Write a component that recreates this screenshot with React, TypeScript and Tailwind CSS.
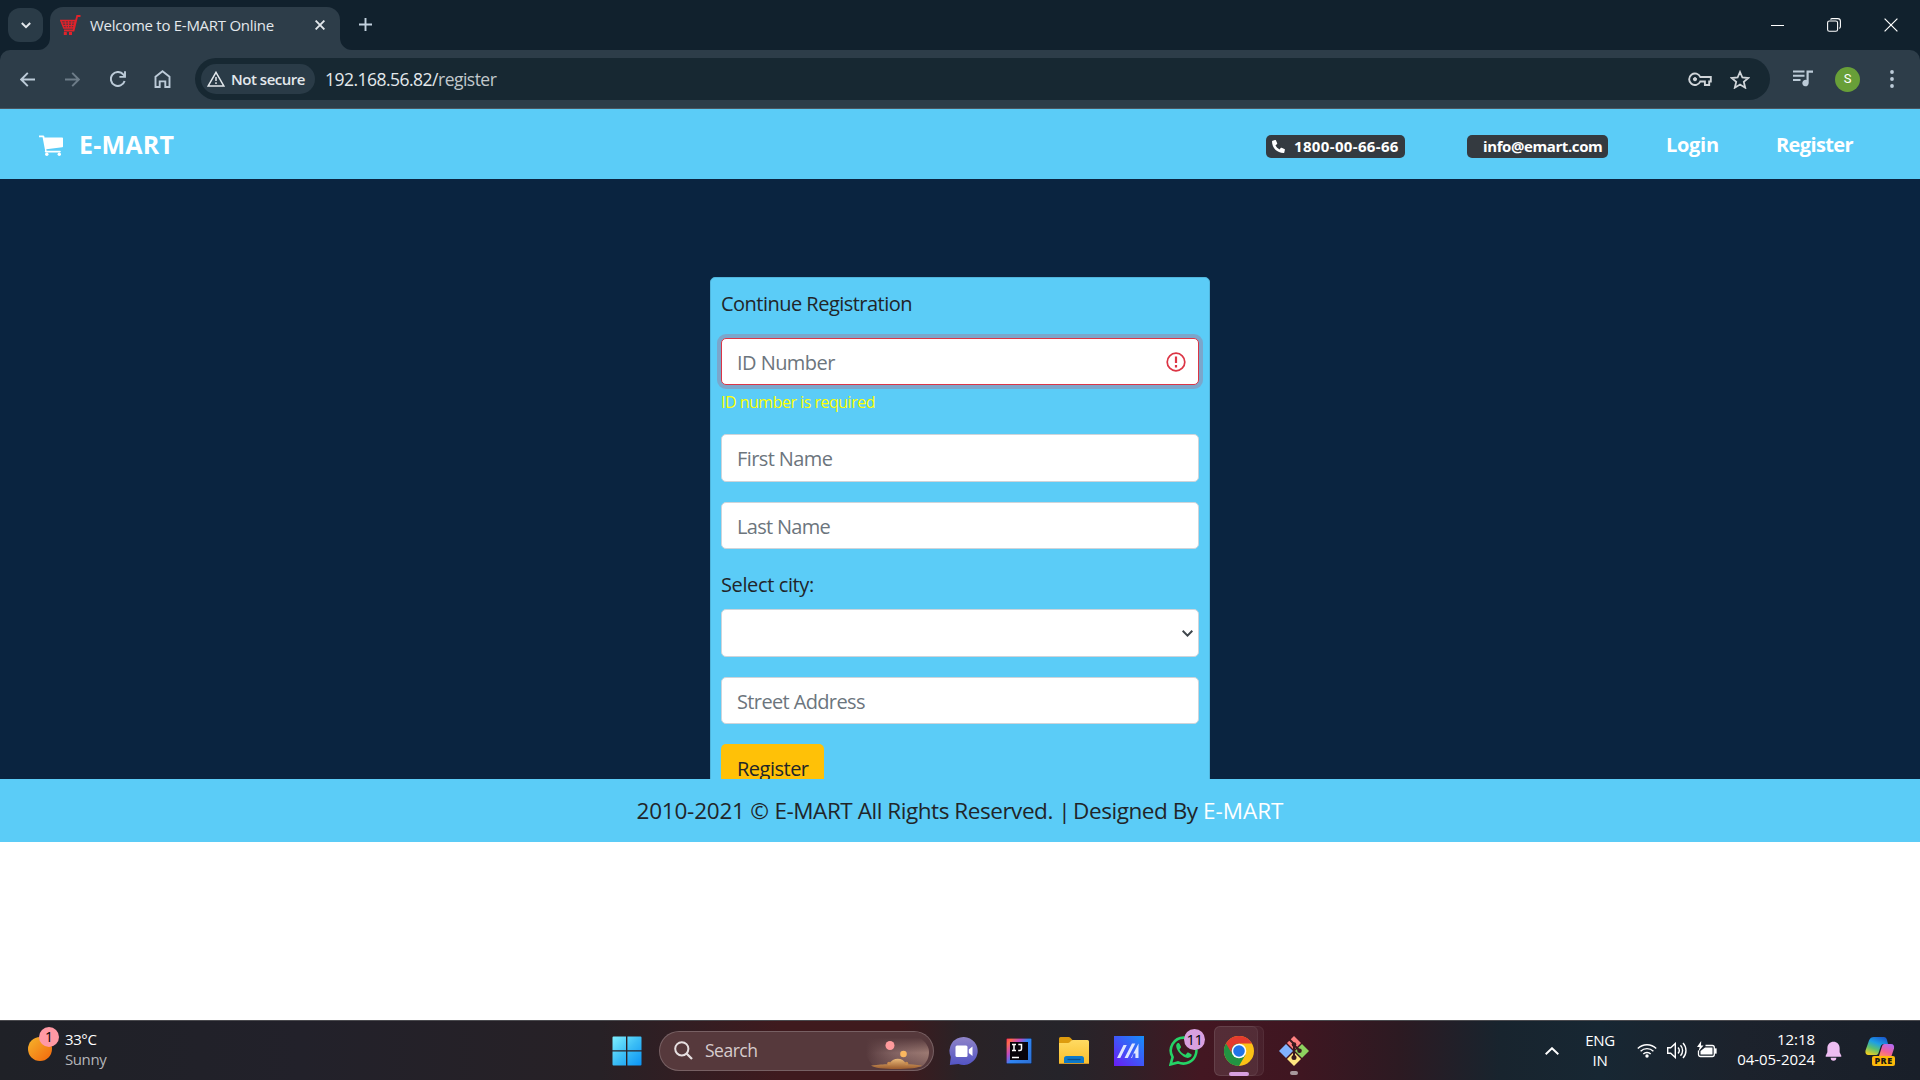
import React from "react";

function Cart({ className }: { className?: string }) {
  return (
    <svg viewBox="0 0 24 21" className={className} fill="currentColor">
      <path d="M0 .4h4.2c.6 0 1 .4 1.100 .9l.2 1.100H23.200c.5 0 .8.4.8.8v8.200c0 .4-.3.8-.7.800L7.300 14.200l.3 1.500H21c.5 0 .8.4.8.8s-.3.9-.8.9H6.700c-.6 0-1-.5-.9-1.100l.3-.9L3.600 2.200H0z" />
      <circle cx="7.800" cy="19.200" r="1.700" />
      <circle cx="20.300" cy="19.200" r="1.700" />
    </svg>
  );
}

function Favicon() {
  return (
    <svg viewBox="0 0 21 21" className="h-[21px] w-[21px]" fill="none" stroke="#e0232b">
      <path d="M20.500 1h-3.300L13.600 15.500H4" strokeWidth="1.800" />
      <path d="M.8 5.500h14.700l-2 7.500H3.800z" fill="#e0232b" fillOpacity=".3" strokeWidth="1.400" />
      <path d="M2 8h13M3 10.500h11M5 5.500l1.500 7.500M8.500 5.500v7.500M12 5.500l-1 7.500" strokeWidth="1.100" />
      <path d="M3.800 18.500h3M9 18.500h3" strokeWidth="3.200" />
    </svg>
  );
}

function TabStrip() {
  return (
    <div className="flex h-[50px] items-start bg-[#11212d]">
      <div className="ml-2 mt-2 flex h-[34px] w-[35px] items-center justify-center rounded-[12px] bg-[#2a3b47]">
        <svg viewBox="0 0 10 7" className="h-[7px] w-[10px]" fill="none" stroke="#e3e8ec" strokeWidth="2">
          <path d="M.8 1l4.200 4.200L9.200 1" />
        </svg>
      </div>
      <div className="relative ml-[7px] mt-[7px] flex h-[43px] w-[290px] rounded-t-[13px] bg-[#2d3d49] pl-[10px]">
        <svg viewBox="0 0 12 12" className="absolute -left-3 bottom-0 h-3 w-3" fill="#2d3d49">
          <path d="M12 0v12H0A12 12 0 0 0 12 0z" />
        </svg>
        <svg viewBox="0 0 12 12" className="absolute -right-3 bottom-0 h-3 w-3" fill="#2d3d49">
          <path d="M0 0v12h12A12 12 0 0 1 0 0z" />
        </svg>
        <div className="mt-[8px]"><Favicon /></div>
        <span className="ml-[9px] mt-[7px] w-[225px] whitespace-nowrap text-[15px] leading-[22px] tracking-[-0.27px] text-[#e3e8ec]">Welcome to E-MART Online</span>
        <svg viewBox="0 0 10 10" className="mt-[13px] h-[10px] w-[10px]" fill="none" stroke="#e3e8ec" strokeWidth="1.900">
          <path d="M.6.6l8.800 8.800M9.400.6L.6 9.400" />
        </svg>
      </div>
      <svg viewBox="0 0 13 13" className="ml-[19px] mt-[18px] h-[13px] w-[13px]" stroke="#c3d2df" strokeWidth="1.900">
        <path d="M6.500 0v13M0 6.500h13" />
      </svg>
      <div className="ml-auto flex items-center pt-[18px]">
        <div className="mr-[43px] h-px w-[13px] bg-white" />
        <svg viewBox="0 0 14 14" className="mr-[43px] h-[14px] w-[14px]" fill="none" stroke="#fff" strokeWidth="1.100">
          <rect x=".6" y="3" width="10" height="10.200" rx="1.800" />
          <path d="M3.500 1.600c.4-.7 1-1 1.700-1h5.500c1.700 0 2.700 1 2.700 2.700v5.300c0 .9-.4 1.500-1 1.900" />
        </svg>
        <svg viewBox="0 0 14 14" className="mr-[22px] h-[14px] w-[14px]" fill="none" stroke="#fff" strokeWidth="1.200">
          <path d="M.6.6l12.800 12.800M13.400.6L.6 13.400" />
        </svg>
      </div>
    </div>
  );
}

function Toolbar() {
  const c = "#bccbd8";
  return (
    <div className="bg-[#11212d]">
      <div className="flex h-[59px] items-center rounded-t-[10px] border-b border-[#4a5660] bg-[#2d3d49]">
        <svg viewBox="0 0 15 15" className="ml-5 h-[15px] w-[15px]" fill="none" stroke={c} strokeWidth="1.900">
          <path d="M15 7.500H1.500M7.800.8L1.200 7.500l6.600 6.700" />
        </svg>
        <svg viewBox="0 0 15 15" className="ml-[30px] h-[15px] w-[15px]" fill="none" stroke="#6d7c88" strokeWidth="1.900">
          <path d="M0 7.500h13.500M7.200.8l6.600 6.700-6.600 6.700" />
        </svg>
        <svg viewBox="0 0 16 16" className="ml-[30px] h-[16px] w-[16px]" fill="none" stroke={c} strokeWidth="2">
          <path d="M14.600 10A7 7 0 1 1 13.200 3.400L15 5.300" />
          <path d="M15 .3v5.600H9.400" strokeWidth="1.900" />
        </svg>
        <svg viewBox="0 0 17 18" className="ml-[28px] h-[18px] w-[17px]" fill="none" stroke={c} strokeWidth="1.900">
          <path d="M1.500 6.800L8.500 1.300l7 5.500v10.200h-4.200v-5.600H5.700v5.600H1.500z" />
        </svg>
        <div className="ml-6 flex h-[42px] w-[1575px] items-center rounded-full bg-[#172832]">
          <div className="ml-[6px] flex h-[30px] w-[114px] items-center rounded-full bg-[#2a3b47]">
            <svg viewBox="0 0 18 16" className="ml-[6px] h-[16px] w-[18px]" fill="none" stroke="#e3e8ec" strokeWidth="1.500">
              <path d="M9 1.300L16.800 15H1.200z" />
              <path d="M9 6v4M9 11.300v1.700" />
            </svg>
            <span className="-mt-px ml-[6px] whitespace-nowrap text-[15px] font-semibold leading-[20px] tracking-[-0.48px] text-[#e3e8ec]">Not secure</span>
          </div>
          <span className="ml-[10px] text-[17.5px] tracking-[-0.52px] text-[#e3e8ec]">192.168.56.82/<span className="text-[#c2c8cc]">register</span></span>
          <svg viewBox="0 0 24 14" className="ml-auto h-[14px] w-[24px]" fill="none" stroke="#d0d5d9" strokeWidth="1.900">
            <path d="M12.300 5H22.800v4.500h-1.600V13h-4.300V9.500h-4.600A5.800 5.800 0 1 1 12.300 5z" />
            <circle cx="7" cy="7.200" r="1.600" fill="#d0d5d9" strokeWidth="1" />
          </svg>
          <svg viewBox="0 0 20 19" className="ml-[18px] mr-5 h-[19px] w-[20px]" fill="none" stroke="#d0d5d9" strokeWidth="1.800">
            <path d="M10 2l2.400 5.500 6 .5-4.600 3.900 1.400 5.800L10 14.600l-5.200 3.100 1.400-5.800L1.600 8l6-.5z" />
          </svg>
        </div>
        <svg viewBox="0 0 20 17" className="-mt-[2px] ml-[23px] h-[17px] w-[20px]" fill={c}>
          <path d="M0 .5h11.500v2H0zM0 4.700h11.500v2H0zM0 8.900h7.500v2H0z" />
          <path d="M13.500.5H20v2.200h-4.300V13a3.200 3.200 0 1 1-2.200-3z" />
        </svg>
        <div className="ml-[22px] flex h-[25px] w-[25px] items-center justify-center rounded-full bg-[#689f38] font-['Roboto'] text-[13px] text-white">S</div>
        <svg viewBox="0 0 4 18" className="ml-[30px] h-[18px] w-[4px]" fill={c}>
          <circle cx="2" cy="2" r="1.900" /><circle cx="2" cy="9" r="1.900" /><circle cx="2" cy="16" r="1.900" />
        </svg>
      </div>
    </div>
  );
}

function NavBar() {
  return (
    <nav className="flex h-[70px] items-center bg-[#5bccf7] font-bold text-white">
      <Cart className="ml-[39px] mt-[2px] h-[21px] w-[24px]" />
      <span className="ml-[16px] text-[25px] leading-[30px] tracking-[0.25px]">E-MART</span>
      <div className="ml-auto flex items-center">
        <div className="mr-[62px] mt-[4px] flex h-[23px] w-[139px] items-center rounded-[5px] bg-[#343a40]">
          <svg viewBox="0 0 13 13" className="ml-[6px] h-[13px] w-[13px]" fill="#fff">
            <path d="M3 .1L.6.700C.2.800 0 1.100 0 1.500 0 7.900 5.200 13 11.500 13c.4 0 .7-.2.800-.6l.6-2.600c.1-.4-.1-.8-.5-.9L9.600 7.700c-.3-.1-.7-.1-.9.200L7.500 9.400C5.700 8.500 4.300 7.100 3.500 5.300l1.400-1.100c.3-.2.4-.6.3-1L4 .5C3.800.2 3.400 0 3 .100z" />
          </svg>
          <span className="ml-[9px] whitespace-nowrap text-[15px] tracking-[0.35px]">1800-00-66-66</span>
        </div>
        <div className="mr-[58px] mt-[4px] flex h-[23px] w-[141px] items-center rounded-[5px] bg-[#343a40] pl-[16px]">
          <span className="whitespace-nowrap text-[15px] tracking-[-0.4px]">info@emart.com</span>
        </div>
        <div className="mt-[2px] w-[110px] text-[20px] tracking-[-0.3px]">Login</div>
        <div className="mt-[2px] w-[144px] text-[20px] tracking-[-0.62px]">Register</div>
      </div>
    </nav>
  );
}

const field = "flex items-center rounded-[5px] border border-[#ced4da] bg-white pl-[15px] text-[20px] text-[#6c757d]";

function RegistrationCard() {
  return (
    <div className="h-[560px] w-[500px] shrink-0 rounded-[5px] border border-[#51b5dc] bg-[#5bccf7] px-[10px] text-[20px] text-[#212529]">
      <div className="mt-[11px] h-[30px] leading-[30px] tracking-[-0.52px]">Continue Registration</div>
      <div className="mt-[19px] flex h-[47px] items-center rounded-[5px] border border-[#dc3545] bg-white pl-[15px] pr-[12px] text-[20px] text-[#6c757d] shadow-[0_0_0_4px_#7ba6cb]">
        <span className="mt-[2px] tracking-[-0.55px]">ID Number</span>
        <svg viewBox="0 0 20 20" className="ml-auto h-[20px] w-[20px]" fill="none" stroke="#dc3545" strokeWidth="1.700">
          <circle cx="10" cy="10" r="8.800" />
          <path d="M10 4.500v6.500M10 13v2.400" strokeWidth="2.200" />
        </svg>
      </div>
      <div className="mt-[5px] h-[24px] text-[16px] leading-[24px] tracking-[-0.5px] text-[#ffff00]">ID number is required</div>
      <div className={`${field} mt-[20px] h-[48px]`}><span className="mt-[2px] tracking-[-0.6px]">First Name</span></div>
      <div className={`${field} mt-[20px] h-[47px]`}><span className="mt-[2px] tracking-[-0.7px]">Last Name</span></div>
      <div className="mt-[21px] h-[30px] leading-[30px] tracking-[-0.38px]">Select city:</div>
      <div className={`${field} mt-[9px] h-[48px]`}>
        <svg viewBox="0 0 11 7" className="ml-auto mr-[5px] h-[7px] w-[11px]" fill="none" stroke="#3f464c" strokeWidth="2">
          <path d="M.7.800l4.800 4.800L10.300.8" />
        </svg>
      </div>
      <div className={`${field} mt-[20px] h-[47px]`}><span className="mt-[2px] tracking-[-0.63px]">Street Address</span></div>
      <div className="mt-[20px] flex h-[48px] w-[103px] items-center rounded-[5px] bg-[#ffc107] pl-[16px]"><span className="mt-[2px] tracking-[-0.5px]">Register</span></div>
    </div>
  );
}

function WindowsLogo() {
  return (
    <svg viewBox="0 0 30 30" className="h-[30px] w-[30px]">
      <defs><linearGradient id="win" x1="0" y1="0" x2="1" y2="1"><stop stopColor="#7ff0ff" /><stop offset=".5" stopColor="#3cbef5" /><stop offset="1" stopColor="#0a93f5" /></linearGradient></defs>
      <path fill="url(#win)" d="M.5 1.500a1 1 0 0 1 1-1H14v13.700H.5zM15.400.5h13.100a1 1 0 0 1 1 1v12.700H15.400zM.5 15.600H14v13.900H1.500a1 1 0 0 1-1-1zM15.400 15.600h14.100v12.900a1 1 0 0 1-1 1H15.400z" />
    </svg>
  );
}

function SearchBox() {
  return (
    <div className="ml-[17px] flex h-[40px] w-[275px] items-center overflow-hidden rounded-full border border-white/20 bg-[#56393c]">
      <svg viewBox="0 0 19 19" className="ml-[14px] h-[19px] w-[19px]" fill="none" stroke="#e6dfe0" strokeWidth="2">
        <circle cx="7.800" cy="7.800" r="6.600" /><path d="M12.500 12.500l5.500 5.500" strokeWidth="2.300" />
      </svg>
      <span className="ml-[12px] text-[17.5px] tracking-[-0.5px] text-[#d6cccd]">Search</span>
      <svg viewBox="0 0 64 38" className="ml-auto mr-[3px] h-[38px] w-[64px]">
        <defs>
          <linearGradient id="sky" x1="0" x2="1"><stop stopColor="#9a7a78" stopOpacity="0" /><stop offset=".5" stopColor="#8a6a68" /><stop offset="1" stopColor="#a58279" /></linearGradient>
          <linearGradient id="skyv" x1="0" y1="0" x2="0" y2="1"><stop offset=".15" stopColor="#56393c" /><stop offset=".55" stopColor="#56393c" stopOpacity=".1" /><stop offset="1" stopColor="#56393c" stopOpacity=".6" /></linearGradient>
          <linearGradient id="sand" x1="0" y1="0" x2="0" y2="1"><stop stopColor="#e9b978" /><stop offset="1" stopColor="#9a5a2c" /></linearGradient>
        </defs>
        <path d="M0 6h54c6 4 9 9 9 14s-2 11-8 15H8L0 24z" fill="url(#sky)" />
        <path d="M0 0h64v38H0z" fill="url(#skyv)" />
        <circle cx="24" cy="13.500" r="4.500" fill="#ff9a9c" />
        <circle cx="37.500" cy="22" r="3.300" fill="#fbb85f" />
        <path d="M5 33.500c8-1 12-1 18-1.500 4-7 14-7 17 0 4 .5 9 .5 16 1.500-4 4.500-46 5-51 0z" fill="url(#sand)" />
        <circle cx="23" cy="31.500" r="1.800" fill="#c88a4c" /><circle cx="40.500" cy="31.500" r="1.800" fill="#c88a4c" />
      </svg>
    </div>
  );
}

function AppIcons() {
  return (
    <>
      <svg viewBox="0 0 30 30" className="ml-[15px] h-[30px] w-[30px]">
        <defs><linearGradient id="vc" x1="0" y1="0" x2="0" y2="1"><stop stopColor="#8f84c8" /><stop offset="1" stopColor="#5354c4" /></linearGradient></defs>
        <path fill="url(#vc)" d="M15 1a14 14 0 1 1-5.500 27L.8 29l1-8A14 14 0 0 1 15 1z" />
        <rect x="6.500" y="9.500" width="12" height="11.500" rx="1.500" fill="#fff" />
        <path d="M19.800 13.500l3.700-3v9.500l-3.700-3z" fill="#fff" />
      </svg>
      <svg viewBox="0 0 26 26" className="ml-[27px] h-[26px] w-[26px]">
        <defs><linearGradient id="ij" x1="0" y1="0" x2="1" y2=".8"><stop stopColor="#fc3160" /><stop offset=".12" stopColor="#ff6a4a" /><stop offset=".35" stopColor="#c14bc0" /><stop offset=".55" stopColor="#2e86f5" /><stop offset="1" stopColor="#2f73d8" /></linearGradient></defs>
        <path d="M0 0h26v26H0z" fill="#0a0d18" /><path d="M.5.5h25v25H.5z" fill="url(#ij)" />
        <path d="M4 4h18v18H4z" fill="#08040a" />
        <path d="M6 6.500h4M8 6.500v6M6 12.500h4M12.300 6.500h3.200v4.600c0 1-.6 1.500-1.700 1.500h-1.600M6 19.500h7" stroke="#fff" strokeWidth="1.500" fill="none" />
      </svg>
      <svg viewBox="0 0 30 27" className="ml-[27px] h-[27px] w-[30px]">
        <defs><linearGradient id="fo" x1="0" y1="0" x2="0" y2="1"><stop stopColor="#ffda62" /><stop offset="1" stopColor="#f9bf2e" /></linearGradient></defs>
        <path d="M0 1.500A1.500 1.500 0 0 1 1.500 0h8.200c.6 0 1 .2 1.400.6L13.500 3 10 8H0z" fill="#dd9b0e" />
        <path d="M0 6h9c.8 0 1.200-.2 1.700-.8l1.500-1.500c.5-.5.9-.7 1.600-.7H28.500A1.500 1.500 0 0 1 30 4.500V26H0z" fill="url(#fo)" />
        <path d="M5 26v-4.500a2.500 2.500 0 0 1 2.500-2.500h15a2.500 2.500 0 0 1 2.500 2.500V26z" fill="#0d79c9" />
        <path d="M8.500 22.500h13" stroke="#0a4f8c" strokeWidth="1.300" /><path d="M0 26h30v1H0z" fill="#cf962a" />
      </svg>
      <svg viewBox="0 0 30 30" className="ml-[25px] h-[30px] w-[30px]">
        <defs><linearGradient id="my" x1="0" y1="1" x2="1" y2="0"><stop stopColor="#6a1cf5" /><stop offset="1" stopColor="#1590fa" /></linearGradient></defs>
        <path d="M0 0h30v30H0z" fill="url(#my)" />
        <path d="M3 22L9.500 9h3.300L6.300 22zM10.500 22L18 7.500h3.300L13.800 22zM17 22l7.500-14.500V22h-3.100v-4.500h-1.900L18 22z" fill="#dfe6ff" />
      </svg>
      <div className="relative ml-[25px] h-[30px] w-[30px]">
        <svg viewBox="0 0 30 30" className="h-[30px] w-[30px]">
          <path d="M15.300 1.600A13 13 0 1 1 9 26.400L1.600 28.400l2-7.200A13 13 0 0 1 15.300 1.600z" fill="none" stroke="#25d366" strokeWidth="2.600" />
          <path d="M10.500 7.800c-.4-.9-.8-.9-1.200-.9-1.300.1-2.200 1.700-2.100 3 .3 5 6.800 11.600 11.500 12 2 .1 3.700-1.100 3.900-2.300.2-1.200 0-1.300-.7-1.700l-2.600-1.300c-.5-.2-.9-.1-1.300.4l-1.100 1.400c-.3.3-.6.4-1 .2-2.400-1-4.100-2.700-5.200-4.600-.2-.4-.1-.7.1-1l1-1.200c.3-.4.3-.7.1-1.200z" fill="#25d366" />
        </svg>
        <span className="absolute -top-[7px] left-[15px] flex h-[21px] w-[21px] items-center justify-center rounded-full bg-[#d9a0e0] text-[15px] leading-none tracking-[-0.5px] text-black">11</span>
      </div>
      <div className="relative ml-[15px] flex h-[50px] w-[50px] items-center">
        <div className="absolute inset-y-0 left-0 w-full rounded-[6px] border border-white/5 bg-white/5" />
        <div className="relative flex h-[50px] w-[44px] items-center justify-center rounded-[6px] border border-white/5 bg-white/5">
          <svg viewBox="0 0 30 30" className="ml-[5px] h-[30px] w-[30px] shrink-0">
            <circle cx="15" cy="15" r="15" fill="#fbc116" />
            <path d="M2 7.500A15 15 0 0 0 15 30l6.500-11.300L15 15V7.500z" fill="#229342" />
            <path d="M2 7.500A15 15 0 0 1 28 7.500H15A7.500 7.500 0 0 0 8 17.800z" fill="#e33b2e" />
            <circle cx="15" cy="15" r="7.300" fill="#fff" /><circle cx="15" cy="15" r="5.800" fill="#1f74e8" />
          </svg>
        </div>
        <span className="absolute bottom-0 left-[15px] h-[4px] w-[20px] rounded-full bg-[#d9a0e0]" />
      </div>
      <div className="relative ml-[15px] h-[30px] w-[30px]">
        <svg viewBox="0 0 30 30" className="h-[30px] w-[30px]">
          <path d="M15 0l7 7-7 7-7-7z" fill="#ff8080" /><path d="M7 8l7 7-7 7-7-7z" fill="#80b3ff" />
          <path d="M23 8l7 7-7 7-7-7z" fill="#8dd35f" /><path d="M15 16l7 7-7 7-7-7z" fill="#ffe680" />
          <path d="M10.500 3.500L15 8v13M15 9l6 6" stroke="#3a1a1f" strokeWidth="2" fill="none" />
          <circle cx="15" cy="8.500" r="2.300" fill="#3a1a1f" /><circle cx="15" cy="21.500" r="2.500" fill="#3a1a1f" /><circle cx="20.500" cy="14.800" r="2.300" fill="#3a1a1f" />
        </svg>
        <span className="absolute -bottom-[9px] left-[11px] h-[4px] w-[8px] rounded-full bg-[#a8989c]" />
      </div>
    </>
  );
}

function Tray() {
  return (
    <div className="ml-auto flex items-center text-[15px] leading-[20px] text-white">
      <svg viewBox="0 0 14 8" className="h-[8px] w-[14px]" fill="none" stroke="#fff" strokeWidth="1.900"><path d="M.7 7.300L7 1.200l6.300 6.100" /></svg>
      <div className="-mt-[2px] ml-[22px] w-[38px] text-center tracking-[-0.3px]"><div>ENG</div><div>IN</div></div>
      <svg viewBox="0 0 20 15" className="ml-[18px] h-[15px] w-[20px]" fill="none" stroke="#fff" strokeWidth="1.400">
        <path d="M.8 5.500a13 13 0 0 1 18.400 0M3.600 8.300a9 9 0 0 1 12.800 0M6.300 11a5.200 5.200 0 0 1 7.400 0" /><circle cx="10" cy="13" r="1.700" fill="#fff" stroke="none" />
      </svg>
      <svg viewBox="0 0 20 17" className="ml-[10px] h-[17px] w-[20px]" fill="none" stroke="#fff" strokeWidth="1.400">
        <path d="M.7 5.800h3L8.300 1.500v14L3.700 11.200h-3zM11 5.500a4.500 4.500 0 0 1 0 6M13.500 3.300a7.500 7.500 0 0 1 0 10.400M16 1a11 11 0 0 1 0 15" />
      </svg>
      <svg viewBox="0 0 20 17" className="-mt-[3px] ml-[10px] h-[17px] w-[20px]" fill="none" stroke="#fff" strokeWidth="1.300">
        <path d="M8.500 4.500h6.800c1.200 0 2 .8 2 2v7c0 1.200-.8 2-2 2H3.500c-1.200 0-2-.8-2-2V9.500" /><path d="M18 8h1v4h-1z" fill="#fff" />
        <path d="M8 6.500h7.500v7H3.500V10z" fill="#fff" stroke="none" /><path d="M4.200 0L0 6h2.700L1.500 10.500 6.500 4.500H4z" fill="#fff" stroke="none" />
      </svg>
      <div className="-mt-[4px] ml-[20px] w-[78px] whitespace-nowrap text-right tracking-[-0.05px]"><div>12:18</div><div>04-05-2024</div></div>
      <svg viewBox="0 0 18 20" className="ml-[10px] h-[20px] w-[17px]" fill="#eebdf2">
        <path d="M9 .3c3.700 0 6.500 2.900 6.500 6.500v4.500L17.300 15c.2.600-.1 1-.7 1H1.400c-.6 0-.9-.4-.7-1l1.800-3.700V6.800C2.500 3.200 5.300.3 9 .3zM6 17.200h6a3 3 0 0 1-6 0z" />
      </svg>
      <div className="relative ml-[23px] mr-[25px] h-[30px] w-[30px]">
        <svg viewBox="0 0 30 30" className="h-[30px] w-[30px]">
          <defs>
            <linearGradient id="cp1" x1=".7" y1="0" x2=".2" y2="1"><stop stopColor="#1a5fd0" /><stop offset=".35" stopColor="#1d9fe6" /><stop offset=".65" stopColor="#5cc070" /><stop offset="1" stopColor="#f0cf20" /></linearGradient>
            <linearGradient id="cp2" x1=".7" y1="0" x2=".2" y2="1"><stop stopColor="#b46af0" /><stop offset=".6" stopColor="#f0609a" /><stop offset="1" stopColor="#ff8a60" /></linearGradient>
          </defs>
          <path d="M9 1h9.500c2 0 3 1 3.500 3l1 4h-4c-2 0-3 1-3.500 3l-2 6c-.5 1.500-1.500 2-3 2H3.500C1 19 0 17 .5 14.500L4 4.500C5 2 6.500 1 9 1z" fill="url(#cp1)" />
          <path d="M19.500 8H26c2.500 0 3.500 2 3 4.500L26.500 20H14l3-9.500C17.500 9 18 8 19.500 8z" fill="url(#cp2)" />
        </svg>
        <span className="absolute left-[7px] top-[20px] flex h-[10px] w-[23px] items-center justify-center rounded-[2px] bg-[#fcb90b] text-[9px] font-extrabold leading-none tracking-[0.5px] text-[#1c1a10]">PRE</span>
      </div>
    </div>
  );
}

function Taskbar() {
  return (
    <div className="flex h-[60px] items-center border-t border-[#4a4a4e] bg-[linear-gradient(90deg,#1f2127_0,#22212a_300px,#272126_600px,#3f1a1e_780px,#3f1a1d_900px,#2a2226_960px,#25242a_1060px,#2e2127_1120px,#431722_1200px,#3f1621_1300px,#2c1a22_1400px,#18242e_1500px,#172733_1600px,#1c222c_1740px,#191f29_1920px)]">
      <div className="flex w-[612px] items-center">
        <div className="relative -mt-[3px] ml-[28px] h-[24px] w-[24px] rounded-full bg-[linear-gradient(135deg,#f5b52c,#f2660c)]">
          <span className="absolute -top-[10px] left-[11px] flex h-[20px] w-[20px] items-center justify-center rounded-full bg-[#ff99a4] text-[14px] leading-none text-black">1</span>
        </div>
        <div className="-mt-[4px] ml-[13px] text-[15px] leading-[20px] tracking-[-0.4px] text-white"><div>33°C</div><div className="text-[#b5b6b9]">Sunny</div></div>
      </div>
      <WindowsLogo />
      <SearchBox />
      <AppIcons />
      <Tray />
    </div>
  );
}

export default function App() {
  return (
    <div className="flex h-[1080px] w-[1920px] flex-col overflow-hidden bg-white font-['Open_Sans',sans-serif]">
      <TabStrip />
      <Toolbar />
      <NavBar />
      <main className="flex h-[600px] justify-center overflow-hidden bg-[#0a2440] pt-[98px]">
        <RegistrationCard />
      </main>
      <footer className="flex h-[63px] items-center justify-center bg-[#5bccf7] text-[22.5px] text-[#212529]">
        <span className="whitespace-pre tracking-[-0.45px]">
          <span className="tracking-[-0.22px]">2010-2021 © </span>E-MART All Rights Reserved. <span className="tracking-[-1.7px]">| </span>Designed By <span className="tracking-[0px] text-white">E-MART</span>
        </span>
      </footer>
      <div className="h-[178px] bg-white" />
      <Taskbar />
    </div>
  );
}
